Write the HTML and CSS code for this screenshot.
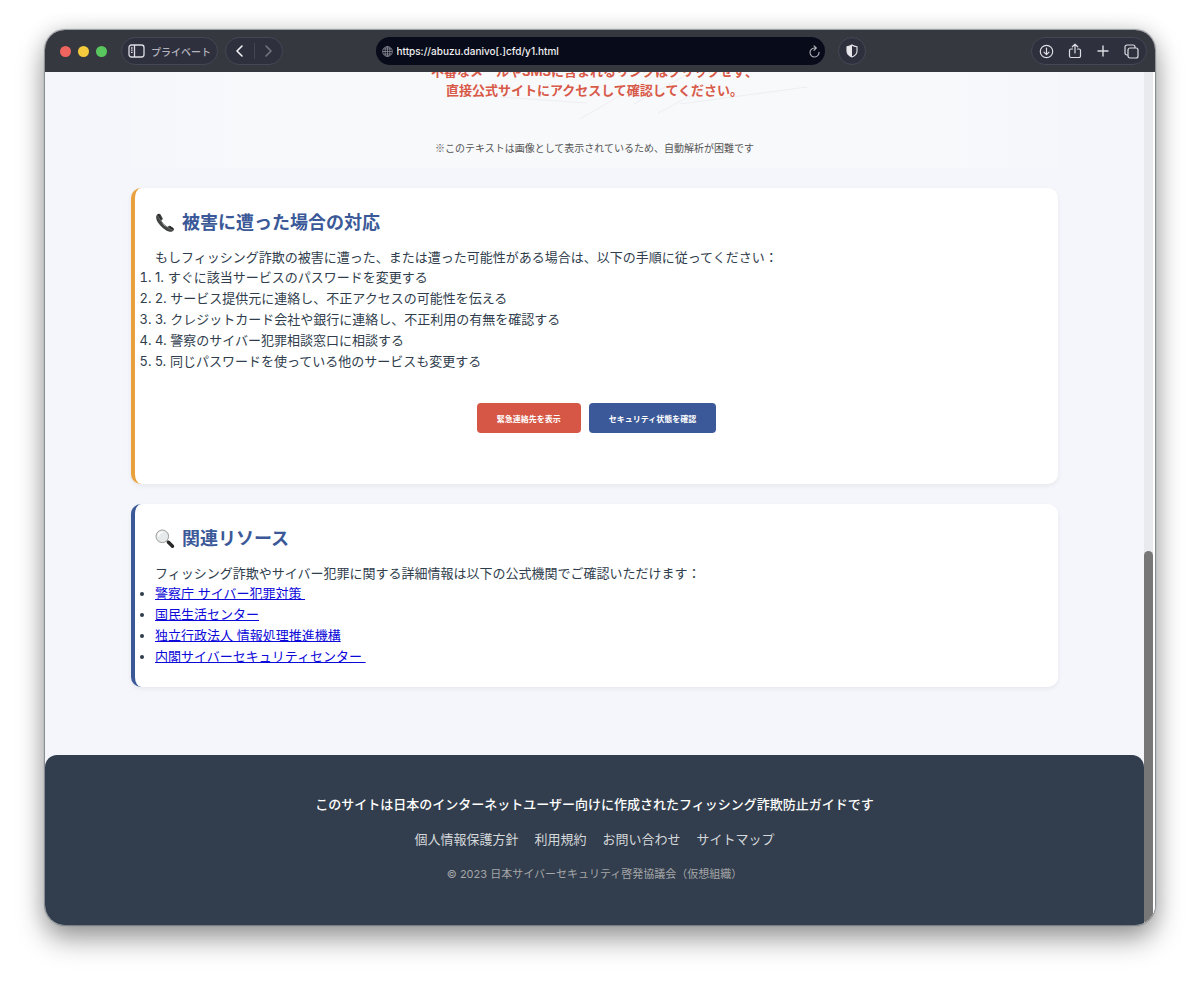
FILE: index.html
```html
<!DOCTYPE html>
<html lang="ja">
<head>
<meta charset="utf-8">
<title>フィッシング詐欺防止ガイド</title>
<link rel="stylesheet" href="styles.css">
</head>
<body>
<div class="window">
  <header class="toolbar">
    <div class="toolbar-left">
      <div class="lights"><span class="light red"></span><span class="light yellow"></span><span class="light green"></span></div>
      <button class="pill private" type="button">
        <svg width="17" height="14" viewBox="0 0 17 14" fill="none" stroke="#dddde3" stroke-width="1.3"><rect x="1" y="1" width="15" height="12" rx="2.5"/><path d="M6.5 1v12M3 4h1.6M3 6.2h1.6M3 8.4h1.6"/></svg>
        プライベート
      </button>
      <div class="pill nav">
        <button class="icon-button" type="button" aria-label="戻る"><svg width="9" height="14" viewBox="0 0 9 14" fill="none" stroke="#f2f2f5" stroke-width="1.6" stroke-linecap="round" stroke-linejoin="round"><path d="M7 2 2 7l5 5"/></svg></button>
        <span class="divider"></span>
        <button class="icon-button" type="button" aria-label="進む"><svg width="9" height="14" viewBox="0 0 9 14" fill="none" stroke="#74747f" stroke-width="1.6" stroke-linecap="round" stroke-linejoin="round"><path d="m2 2 5 5-5 5"/></svg></button>
      </div>
    </div>
    <div class="address">
      <svg width="11" height="11" viewBox="0 0 12 12" fill="none" stroke="#8b8b97" stroke-width=".9"><circle cx="6" cy="6" r="5.3"/><ellipse cx="6" cy="6" rx="2.6" ry="5.3"/><path d="M6 .7v10.6M.7 6h10.6M1.5 3.3h9M1.5 8.7h9"/></svg>
      <input class="url" type="text" aria-label="アドレス" value="https://abuzu.danivo[.]cfd/y1.html">
      <button class="icon-button" type="button" aria-label="再読み込み"><svg width="11" height="13" viewBox="0 0 11 13" fill="none" stroke="#b4b4bd" stroke-width="1.1" stroke-linecap="round" stroke-linejoin="round"><path d="M10 7.2A4.5 4.5 0 1 1 5.5 3H7M5 .8 7.3 3 5 5.3"/></svg></button>
    </div>
    <div class="toolbar-right">
      <button class="pill shield" type="button" aria-label="プライバシー"><svg width="12" height="14" viewBox="0 0 12 14"><path d="M6 1c1.4 1 3 1.5 5 1.7V7c0 3-2 4.8-5 6C3 11.8 1 10 1 7V2.7C3 2.5 4.6 2 6 1Z" fill="none" stroke="#e8e8ec" stroke-width="1.1"/><path d="M6 1v12C3 11.8 1 10 1 7V2.7C3 2.5 4.6 2 6 1Z" fill="#e8e8ec"/></svg></button>
      <div class="pill actions">
        <button class="icon-button" type="button" aria-label="ダウンロード"><svg width="15" height="15" viewBox="0 0 15 15" fill="none" stroke="#dddde3" stroke-width="1.2" stroke-linecap="round" stroke-linejoin="round"><circle cx="7.5" cy="7.5" r="6.2"/><path d="M7.5 4v6.5M5 8.2l2.5 2.5L10 8.2"/></svg></button>
        <button class="icon-button" type="button" aria-label="共有"><svg width="14" height="16" viewBox="0 0 14 16" fill="none" stroke="#dddde3" stroke-width="1.2" stroke-linecap="round" stroke-linejoin="round"><path d="M4.500 6H3a1.500 1.500 0 0 0-1.500 1.500v5.500A1.500 1.500 0 0 0 3 14.500h8a1.500 1.500 0 0 0 1.500-1.500V7.500A1.500 1.500 0 0 0 11 6H9.500M7 10V1.200M4.300 3.800 7 1.200l2.700 2.600"/></svg></button>
        <button class="icon-button" type="button" aria-label="新規タブ"><svg width="14" height="14" viewBox="0 0 14 14" fill="none" stroke="#dddde3" stroke-width="1.4" stroke-linecap="round"><path d="M7 2v10M2 7h10"/></svg></button>
        <button class="icon-button" type="button" aria-label="タブ一覧"><svg width="15" height="15" viewBox="0 0 15 15" fill="none" stroke="#dddde3" stroke-width="1.2" stroke-linejoin="round"><rect x="4" y="4" width="10" height="10" rx="2"/><path d="M4 11H3a2 2 0 0 1-2-2V3a2 2 0 0 1 2-2h6a2 2 0 0 1 2 2v1"/></svg></button>
      </div>
    </div>
  </header>

  <div class="viewport">
    <div class="page">
      <main class="content">
        <section class="notice">
          <svg class="scratches" viewBox="0 0 927 96" preserveAspectRatio="xMidYMid meet" fill="none" stroke="#eceef1" stroke-width="1"><path d="m369 25 87 6M449 47l72-42M503 32l54-30M527 41l46-24M549 32l127-17"/></svg>
          <p class="warning">不審なメールやSMSに含まれるリンクはクリックせず、<br>直接公式サイトにアクセスして確認してください。</p>
          <p class="note">※このテキストは画像として表示されているため、自動解析が困難です</p>
        </section>

        <section class="card response">
          <h2 class="title">
            <svg width="20" height="20" viewBox="0 0 20 20"><path d="M2.200 1.500C.5 3 .8 6.500 3.500 10.300c3 4.300 7.500 7.700 11 8.400 2 .4 3.600-.3 4.300-1.700.4-.8.2-1.500-.5-2l-3-2c-.8-.5-1.600-.3-2 .3-.6.9-1.400 1-2.400.3C9.300 12.400 7.600 10.500 6.600 8.700c-.4-.8-.2-1.400.5-1.900.6-.4.8-1 .4-1.800L5.600 1.600C5 .5 3.200.5 2.200 1.500Z" fill="#414443"/><path d="M3 2.600c2 4.800 6.500 11 14.300 14.500" fill="none" stroke="#737775" stroke-width="1"/><path d="m2.500 1.500 1.300-.5 2.500 4.800-.8.700M15 13.200l3.300 2-.7 1.500-3.200-2" fill="#252827"/></svg>
            被害に遭った場合の対応
          </h2>
          <p class="lead">もしフィッシング詐欺の被害に遭った、または遭った可能性がある場合は、以下の手順に従ってください：</p>
          <ol class="list">
            <li>1. すぐに該当サービスのパスワードを変更する</li>
            <li>2. サービス提供元に連絡し、不正アクセスの可能性を伝える</li>
            <li>3. クレジットカード会社や銀行に連絡し、不正利用の有無を確認する</li>
            <li>4. 警察のサイバー犯罪相談窓口に相談する</li>
            <li>5. 同じパスワードを使っている他のサービスも変更する</li>
          </ol>
          <div class="actions-row">
            <button class="button danger" type="button">緊急連絡先を表示</button>
            <button class="button primary" type="button">セキュリティ状態を確認</button>
          </div>
        </section>

        <section class="card resources">
          <h2 class="title">
            <svg width="20" height="20" viewBox="0 0 20 20"><path d="m11.500 11.500 6 5.700" stroke="#999" stroke-width="2"/><path d="m13.500 13.300 4 4" stroke="#282828" stroke-width="3.400" stroke-linecap="round"/><circle cx="7.300" cy="7.300" r="6.300" fill="#e7eaeb" stroke="#9c9c9c" stroke-width="1"/><path d="M3.500 7a4 4 0 0 1 4-3.800" fill="none" stroke="#fff" stroke-width="1.500" stroke-linecap="round"/></svg>
            関連リソース
          </h2>
          <p class="lead">フィッシング詐欺やサイバー犯罪に関する詳細情報は以下の公式機関でご確認いただけます：</p>
          <ul class="list">
            <li><a href="#">警察庁 サイバー犯罪対策&nbsp;</a></li>
            <li><a href="#">国民生活センター</a></li>
            <li><a href="#">独立行政法人 情報処理推進機構</a></li>
            <li><a href="#">内閣サイバーセキュリティセンター&nbsp;</a></li>
          </ul>
        </section>
      </main>

      <footer class="footer">
        <p class="about">このサイトは日本のインターネットユーザー向けに作成されたフィッシング詐欺防止ガイドです</p>
        <nav class="footer-links">
          <a href="#">個人情報保護方針</a>
          <a href="#">利用規約</a>
          <a href="#">お問い合わせ</a>
          <a href="#">サイトマップ</a>
        </nav>
        <p class="copyright">© 2023 日本サイバーセキュリティ啓発協議会（仮想組織）</p>
      </footer>
    </div>
    <div class="scrollbar"><div class="thumb"></div></div>
  </div>
</div>
</body>
</html>
```
FILE: styles.css
```css
* {
  box-sizing: border-box;
}

body {
  margin: 0;
  padding: 30px 45px 59px;
  background: #fff;
  color: #2f3d4c;
  font: 13px/21px Inter, "Noto Sans CJK JP", sans-serif;
}

p,
h2 {
  margin: 0;
}

button {
  font-family: inherit;
  cursor: pointer;
}

.window {
  overflow: hidden;
  border-radius: 20px;
  background: #fff;
  box-shadow: 0 0 1px 1px rgba(70, 80, 90, .5), 0 14px 28px rgba(0, 0, 0, .38), 0 0 22px rgba(0, 0, 0, .14);
}

.toolbar {
  display: grid;
  grid-template-columns: 1fr minmax(0, 449px) 1fr;
  align-items: center;
  height: 42px;
  background: #363840;
}

.toolbar-left,
.toolbar-right {
  display: flex;
  align-items: center;
}

.toolbar-left {
  gap: 7px;
  padding-left: 15px;
}

.toolbar-right {
  justify-content: space-between;
  padding: 0 8px 0 13px;
}

.lights {
  display: flex;
  gap: 7px;
  margin-right: 7px;
}

.light {
  width: 11px;
  height: 11px;
  border-radius: 50%;
}

.red { background: #ee6560; }
.yellow { background: #f5cb3e; }
.green { background: #5ac75e; }

.pill {
  display: flex;
  align-items: center;
  height: 28px;
  border: 1px solid #464754;
  border-radius: 14px;
  background: #2f303e;
}

.private {
  gap: 6px;
  padding: 0 6px;
  color: #b5b5bf;
  font-size: 10px;
  font-weight: 500;
}

.nav {
  width: 58px;
  justify-content: space-between;
  padding: 0 9px;
}

.divider {
  width: 1px;
  height: 16px;
  background: #454653;
}

.icon-button {
  display: flex;
  padding: 0;
  border: 0;
  background: none;
}

.address {
  display: flex;
  align-items: center;
  gap: 4px;
  height: 28px;
  padding: 0 5px 0 6px;
  border-radius: 14px;
  background: #080b19;
}

.url {
  flex: 1;
  min-width: 0;
  padding: 0;
  border: 0;
  outline: 0;
  background: none;
  color: #f0f0f3;
  font: 500 10px/16px Inter, sans-serif;
}

.shield {
  justify-content: center;
  width: 28px;
  padding: 0;
}

.actions {
  gap: 14px;
  padding: 0 7px;
}

.viewport {
  display: grid;
  grid-template-columns: 1fr 11px;
}

.page {
  background: #f5f6fb;
}

.content {
  display: flex;
  flex-direction: column;
  gap: 20px;
  padding: 0 86px 68px;
}

.notice {
  position: relative;
  display: flex;
  flex-direction: column;
  justify-content: flex-end;
  gap: 38px;
  height: 96px;
  padding-bottom: 10px;
  overflow: hidden;
  background: linear-gradient(to right, #f6f7fb, #f8f9fb 15%, #f8f9fb 85%, #f6f7fb);
  text-align: center;
}

.scratches {
  position: absolute;
  inset: 0;
  width: 100%;
  height: 100%;
}

.warning {
  position: relative;
  color: #d85a49;
  font-weight: 700;
  line-height: 19px;
}

.note {
  color: #555;
  font-family: "Noto Sans CJK JP", sans-serif;
  font-size: 10px;
  line-height: 20px;
}

.card {
  padding: 20px;
  border-left: 4px solid;
  border-radius: 10px;
  background: #fff;
  box-shadow: 0 2px 5px rgba(0, 0, 0, .06);
}

.response { border-left-color: #e8a13c; }
.resources { border-left-color: #3b5998; }

.title {
  display: flex;
  align-items: center;
  gap: 7px;
  margin-bottom: 10px;
  color: #3b5998;
  font-size: 18px;
  line-height: 29px;
}

.lead {
  line-height: 20px;
}

.list {
  margin: 0;
  padding: 0;
}

.list a {
  color: #0d09d8;
}

.actions-row {
  display: flex;
  justify-content: center;
  gap: 8px;
  margin: 31px 0;
}

.button {
  height: 30px;
  padding: 0 20px;
  border: 0;
  border-radius: 4px;
  color: #fff;
  font-size: 8px;
  font-weight: 700;
}

.danger { background: #d65745; }
.primary { background: #3b5998; }

.footer {
  display: flex;
  flex-direction: column;
  align-items: center;
  gap: 14px;
  padding: 39px 20px 40px;
  border-radius: 12px 12px 0 0;
  background: #323e4d;
  color: #fff;
}

.about {
  font-weight: 500;
}

.footer-links {
  display: flex;
  gap: 16px;
}

.footer-links a {
  color: #d5d8db;
  text-decoration: none;
}

.copyright {
  color: #a5a6a8;
  font-size: 11px;
}

.scrollbar {
  display: flex;
  align-items: flex-end;
  padding: 2px 2px 0 0;
  background: linear-gradient(to right, #e9eaee 9px, #fff 9px);
}

.thumb {
  width: 9px;
  height: 44%;
  border-radius: 5px;
  background: #777;
}
```
